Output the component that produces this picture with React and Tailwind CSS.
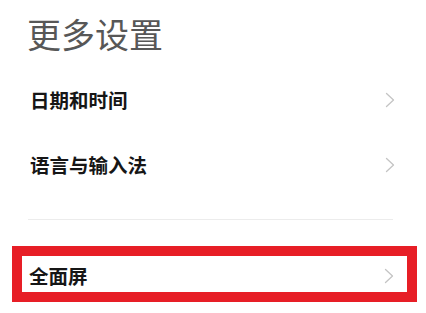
import React from 'react'

const font = { fontFamily: '"Noto Sans CJK SC", "Noto Sans", sans-serif' }

const Chevron = () => (
  <svg width="10" height="16" viewBox="0 0 10 16" fill="none" className="shrink-0">
    <path d="M1.5 1.5 L8.5 8 L1.5 14.5" stroke="#c4c4c4" strokeWidth="1.3" strokeLinecap="round" strokeLinejoin="round" />
  </svg>
)

const Row = ({ label }) => (
  <div className="h-[65px] flex items-center justify-between pl-[30px] pr-[31px]">
    <span className="text-[19.5px] font-bold text-[#161616] leading-none">{label}</span>
    <Chevron />
  </div>
)

export default function App() {
  return (
    <div className="w-[426px] h-[313px] bg-white overflow-hidden" style={font}>
      {/* Header */}
      <div className="h-[67px] flex items-center pl-[27px]">
        <h1 className="text-[34px] font-normal text-[#575757] leading-none">更多设置</h1>
      </div>

      <Row label="日期和时间" />
      <Row label="语言与输入法" />

      <div className="mt-[22px] ml-[28px] mr-[33px] h-px bg-[#ececec]" />

      {/* Highlighted row */}
      <div className="mt-[26px] ml-[12px] mr-[9px] border-[10px] border-[#e71e26]">
        <div className="h-[36px] flex items-center justify-between pl-[7px] pr-[13px] pt-[4px]">
          <span className="text-[19.5px] font-bold text-[#161616] leading-none">全面屏</span>
          <Chevron />
        </div>
      </div>
    </div>
  )
}
